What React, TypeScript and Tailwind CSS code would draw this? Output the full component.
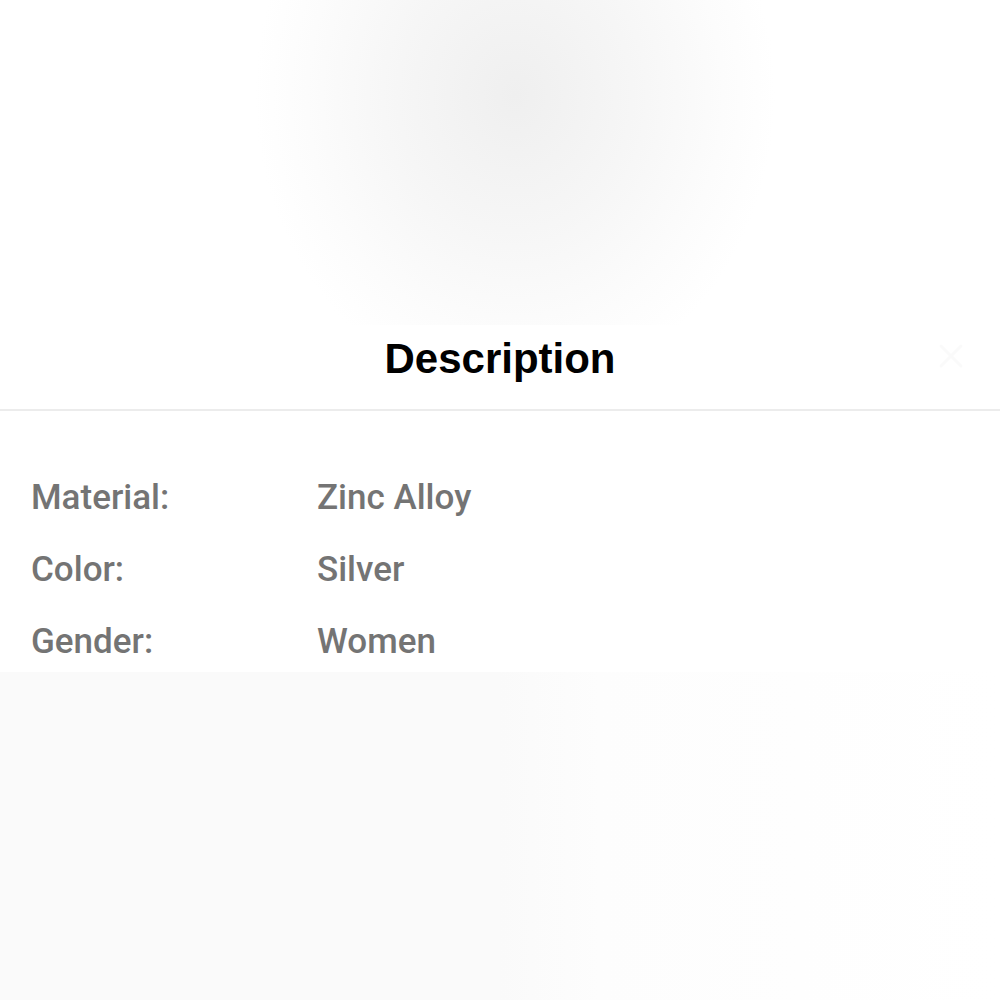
import React from 'react'

const specs = [
  { label: 'Material:', value: 'Zinc Alloy' },
  { label: 'Color:', value: 'Silver' },
  { label: 'Gender:', value: 'Women' },
]

const App: React.FC = () => {
  return (
    <div className="flex h-[1000px] w-[1000px] flex-col overflow-hidden bg-white font-['Roboto','Liberation_Sans',sans-serif]">
      {/* Faded product photo above */}
      <div className="h-[325px] w-full bg-[radial-gradient(ellipse_260px_300px_at_515px_95px,#efefef_0%,#f6f6f6_45%,#fcfcfc_80%,#ffffff_100%)]"></div>

      {/* Description sheet */}
      <div className="relative h-[347px] overflow-hidden bg-white">
        <div className="flex h-[84px] items-center justify-center pb-[18px]">
          <h2 className="font-['Liberation_Sans',Arial,sans-serif] text-[42px] font-bold text-black">
            Description
          </h2>
        </div>
        <svg
          className="absolute right-[34px] top-[16px]"
          width="30"
          height="30"
          viewBox="0 0 30 30"
        >
          <path d="M5 5 L25 25 M25 5 L5 25" stroke="#fafafa" strokeWidth="3" strokeLinecap="round" />
        </svg>
        <div className="h-[2px] w-full bg-[#ececec]"></div>

        <div className="flex flex-col pt-[51px]">
          {specs.map((s) => (
            <div key={s.label} className="flex h-[72px] items-center pl-[31px] text-[35px] font-medium text-[#747474]">
              <span className="w-[286px]">{s.label}</span>
              <span>{s.value}</span>
            </div>
          ))}
        </div>
      </div>

      {/* Faded photo below */}
      <div className="flex-1 bg-[linear-gradient(90deg,#fafafa_0%,#fafafa_50%,#fdfdfd_60%,#ffffff_100%)]"></div>
    </div>
  )
}

export default App
